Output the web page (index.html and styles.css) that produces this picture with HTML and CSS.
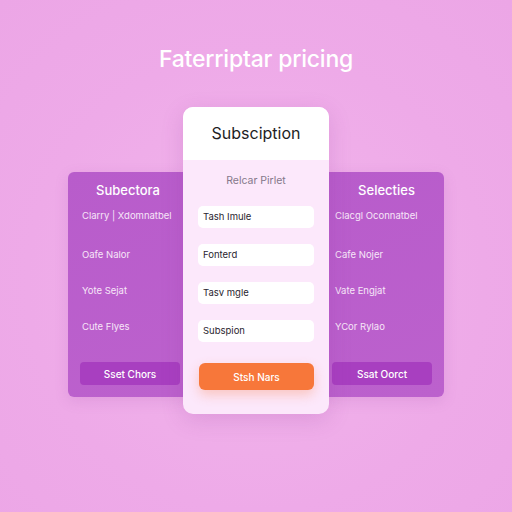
FILE: index.html
```html
<!DOCTYPE html>
<html lang="en">
<head>
    <meta charset="UTF-8">
    <title>Pricing</title>
    <link rel="stylesheet" href="styles.css">
</head>
<body>
    <h1 class="title">Faterriptar pricing</h1>
    <div class="plans">
        <div class="plan side left">
            <h2>Subectora</h2>
            <ul>
                <li class="first">Clarry | Xdomnatbel</li>
                <li>Oafe Nalor</li>
                <li>Yote Sejat</li>
                <li>Cute Flyes</li>
            </ul>
            <button class="side-btn">Sset Chors</button>
        </div>
        <div class="plan main">
            <div class="main-head">Subsciption</div>
            <div class="main-body">
                <p class="sub">Relcar Pirlet</p>
                <div class="field">Tash Imule</div>
                <div class="field">Fonterd</div>
                <div class="field">Tasv mgle</div>
                <div class="field">Subspion</div>
                <button class="main-btn">Stsh Nars</button>
            </div>
        </div>
        <div class="plan side right">
            <h2>Selecties</h2>
            <ul>
                <li class="first">Clacgl Oconnatbel</li>
                <li>Cafe Nojer</li>
                <li>Vate Engjat</li>
                <li>YCor Rylao</li>
            </ul>
            <button class="side-btn">Ssat Oorct</button>
        </div>
    </div>
</body>
</html>
```

FILE: styles.css
```css
body {
    margin: 0;
    height: 512px;
    font-family: Inter, "Noto Sans", sans-serif;
    background: radial-gradient(circle at 50% 55%, #f2b6ec 0%, #eeaae8 60%, #eca6e6 100%);
}
.title {
    margin: 0;
    padding-top: 44px;
    height: 30px;
    line-height: 30px;
    text-align: center;
    font-size: 23px;
    font-weight: 500;
    color: #fff;
    letter-spacing: -0.2px;
}
.plans {
    display: flex;
    justify-content: center;
    align-items: flex-start;
    margin-top: 33px;
}
.plan {
    box-sizing: border-box;
}
.side {
    position: relative;
    width: 124px;
    height: 225px;
    margin-top: 65px;
    padding: 10px 12px 12px 14px;
    background: linear-gradient(160deg, #b85ccb, #bc61cd);
    border-radius: 6px;
    color: #fff;
    display: flex;
    flex-direction: column;
    box-shadow: 0 4px 14px rgba(150, 60, 160, 0.15);
}
.side.left {
    margin-right: -9px;
}
.side.right {
    width: 123px;
    margin-left: -8px;
}
.side h2 {
    margin: 0;
    font-size: 13px;
    font-weight: 500;
    line-height: 16px;
    text-align: center;
}
.side.left h2 {
    padding-right: 6px;
}
.side.right h2 {
    padding-left: 6px;
}
.side ul {
    list-style: none;
    margin: 12px 0 0;
    padding: 0;
    flex: 1;
}
.side li {
    font-size: 9.5px;
    line-height: 12px;
    height: 12px;
    margin-bottom: 24px;
    color: #f7e6f8;
    white-space: nowrap;
}
.side li.first {
    margin-bottom: 27px;
}
.side-btn {
    display: block;
    width: 100px;
    height: 23px;
    border: none;
    border-radius: 4px;
    background: #a83fc0;
    color: #fff;
    font-family: inherit;
    font-size: 10px;
    font-weight: 500;
}
.side.left .side-btn {
    margin-left: -2px;
}
.side.right .side-btn {
    margin-left: -3px;
}
.main {
    position: relative;
    z-index: 1;
    width: 146px;
    height: 307px;
    border-radius: 10px;
    overflow: hidden;
    background: #fce8fb;
    box-shadow: 0 6px 22px rgba(140, 50, 150, 0.18);
}
.main-head {
    height: 53px;
    line-height: 53px;
    background: #fff;
    text-align: center;
    font-size: 16px;
    color: #1e1e24;
}
.main-body {
    padding: 14px 15px 0;
    display: flex;
    flex-direction: column;
}
.sub {
    margin: 0 0 18px;
    text-align: center;
    font-size: 10.5px;
    line-height: 14px;
    color: #85788a;
}
.field {
    height: 22px;
    line-height: 22px;
    margin-bottom: 16px;
    padding-left: 5px;
    background: #fff;
    border-radius: 5px;
    font-size: 9.5px;
    color: #2a2530;
}
.main-btn {
    height: 27px;
    margin-top: 5px;
    margin-left: 1px;
    border: none;
    border-radius: 6px;
    background: #f7773a;
    color: #fff;
    font-family: inherit;
    font-size: 10px;
    font-weight: 500;
    box-shadow: 0 5px 12px rgba(247, 119, 58, 0.3);
}
```
